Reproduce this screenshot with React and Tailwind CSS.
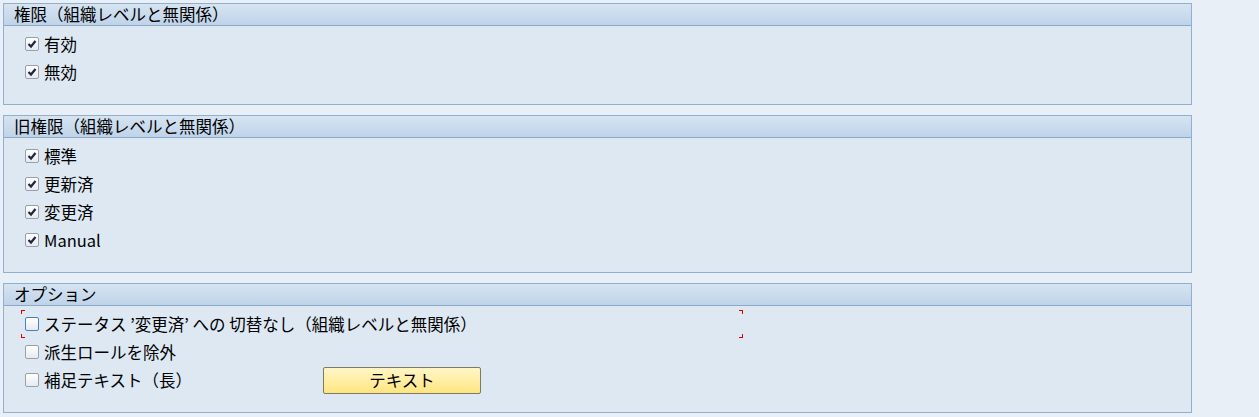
const font = { fontFamily: '"Noto Sans CJK JP", "Noto Sans", sans-serif' };

const Checkbox = ({ checked, focused }) => (
  <span
    className={`flex h-[14px] w-[14px] shrink-0 items-center justify-center rounded-[2px] border bg-gradient-to-b from-white to-[#e6eaef] ${
      focused ? "border-[#4d7fc0]" : "border-[#98a0a9]"
    }`}
  >
    {checked && (
      <svg width="10" height="10" viewBox="0 0 10 10">
        <path d="M1.5 5 L4 7.5 L8.5 2" fill="none" stroke="#20263f" strokeWidth="2.2" />
      </svg>
    )}
  </span>
);

const Row = ({ label, checked, children, labelWidth }) => (
  <div className="flex h-[28px] items-center pl-[21px]">
    <Checkbox checked={checked} />
    <span
      className="ml-[5px] text-[16.5px] leading-none text-black"
      style={labelWidth ? { width: labelWidth } : undefined}
    >
      {label}
    </span>
    {children}
  </div>
);

const Panel = ({ title, children }) => (
  <section className="border border-[#93afd0] bg-[#dde8f3]">
    <div className="flex h-[22px] items-center border-b border-[#8ba8c9] bg-gradient-to-b from-[#d6e4f1] to-[#bfd3e9] pl-[10px] text-[16.5px] leading-none text-black">
      {title}
    </div>
    <div className="pt-[4px] pb-[18px]">{children}</div>
  </section>
);

export default function App() {
  return (
    <div className="min-h-screen bg-[#e9eff6] pl-[3px] pt-[3px]" style={font}>
      <div className="flex w-[1189px] flex-col gap-[10px]">
        <Panel title="権限（組織レベルと無関係）">
          <Row label="有効" checked />
          <Row label="無効" checked />
        </Panel>

        <Panel title="旧権限（組織レベルと無関係）">
          <Row label="標準" checked />
          <Row label="更新済" checked />
          <Row label="変更済" checked />
          <Row label="Manual" checked />
        </Panel>

        <Panel title="オプション">
          {/* focused row with red corner brackets */}
          <div className="relative ml-[17px] w-[722px]">
            <span className="absolute left-0 top-0 h-[4px] w-[4px] border-l border-t border-[#e00000]" />
            <span className="absolute bottom-0 left-0 h-[4px] w-[4px] border-b border-l border-[#e00000]" />
            <span className="absolute right-0 top-0 h-[4px] w-[4px] border-r border-t border-[#e00000]" />
            <span className="absolute bottom-0 right-0 h-[4px] w-[4px] border-b border-r border-[#e00000]" />
            <div className="flex h-[28px] items-center pl-[4px]">
              <Checkbox focused />
              <span className="ml-[5px] text-[16.5px] leading-none text-black">
                ステータス ’変更済’ への 切替なし（組織レベルと無関係）
              </span>
            </div>
          </div>
          <Row label="派生ロールを除外" />
          <Row label="補足テキスト（長）" labelWidth="279px">
            <button className="h-[27px] w-[158px] rounded-[2px] border border-[#7d7a6a] bg-gradient-to-b from-[#fff6c6] to-[#ffe57e] text-[16.5px] leading-none text-black">
              テキスト
            </button>
          </Row>
        </Panel>
      </div>
    </div>
  );
}
